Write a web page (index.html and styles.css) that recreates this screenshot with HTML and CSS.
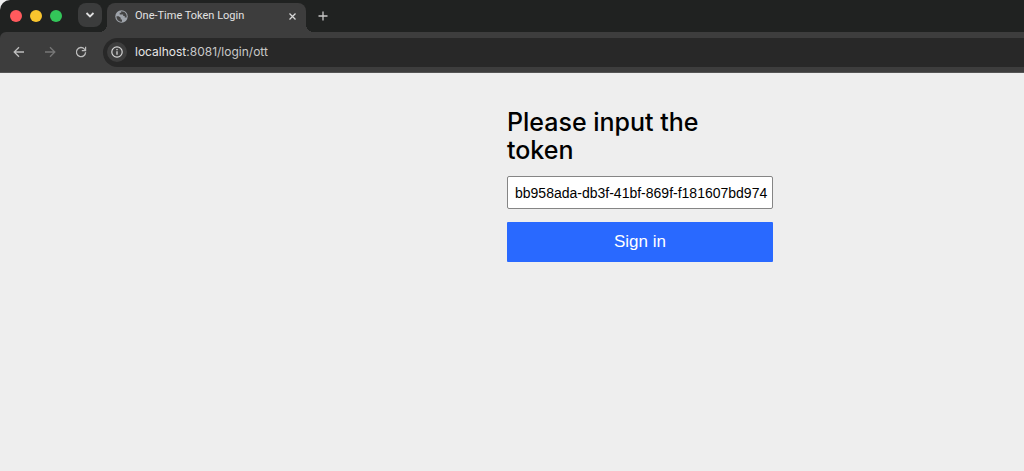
FILE: index.html
```
<!DOCTYPE html>
<html lang="en">
<head>
<meta charset="utf-8">
<title>One-Time Token Login</title>
<link rel="stylesheet" href="styles.css">
</head>
<body>
<header class="browser">
  <div class="tab-strip">
    <div class="lights"><span class="light red"></span><span class="light yellow"></span><span class="light green"></span></div>
    <button class="tab-search" type="button" aria-label="Search tabs">
      <svg width="10" height="8" viewBox="0 0 10 8"><path d="M1.500 2 5 5.500 8.500 2" fill="none" stroke="#dedede" stroke-width="1.800"/></svg>
    </button>
    <div class="tab">
      <svg class="globe" width="13" height="13" viewBox="0 0 13 13"><circle cx="6.500" cy="6.500" r="6.200" fill="#9fa4ab"/><path d="M1.500 6.200h2.200l2 1.600v1.600H7v2.300C3.700 12 1.300 9.500 1.500 6.200ZM6.200 1.200v1.500H4.700v1.800h3.500v1.400h1.500v1.600h1.900c.7-3.300-1.500-6.300-5.400-6.300Z" fill="#444"/></svg>
      <span class="tab-title">One-Time Token Login</span>
      <button class="icon-button close" type="button" aria-label="Close tab">
        <svg width="9" height="9" viewBox="0 0 9 9"><path d="m1.500 1.500 6 6m0-6-6 6" stroke="#d8d8d8" stroke-width="1.300"/></svg>
      </button>
    </div>
    <button class="icon-button new-tab" type="button" aria-label="New tab">
      <svg width="10" height="10" viewBox="0 0 10 10"><path d="M5 .5v9M.5 5h9" stroke="#c8c8c8" stroke-width="1.300"/></svg>
    </button>
  </div>
  <div class="toolbar">
    <button class="icon-button" type="button" aria-label="Back">
      <svg width="12" height="12" viewBox="0 0 12 12"><path d="M11 6H1.500M6 1.200 1.200 6 6 10.800" fill="none" stroke="#bdbdbd" stroke-width="1.300"/></svg>
    </button>
    <button class="icon-button" type="button" aria-label="Forward" disabled>
      <svg width="12" height="12" viewBox="0 0 12 12"><path d="M1 6h9.500M6 1.200 10.800 6 6 10.800" fill="none" stroke="#777" stroke-width="1.300"/></svg>
    </button>
    <button class="icon-button" type="button" aria-label="Reload">
      <svg width="12" height="12" viewBox="0 0 12 12"><path d="M10.600 6.300A4.600 4.600 0 1 1 9.500 3.100l1 1" fill="none" stroke="#bdbdbd" stroke-width="1.300"/><path d="M11.200.8v4.400H6.800V4h2.400l.8-.8V.8Z" fill="#bdbdbd"/></svg>
    </button>
    <div class="address">
      <span class="site-info"><svg width="12" height="12" viewBox="0 0 12 12"><circle cx="6" cy="6" r="5.200" fill="none" stroke="#d6d6d6" stroke-width="1.200"/><path d="M6 5.300v3.500M6 3v1.300" stroke="#d6d6d6" stroke-width="1.300"/></svg></span>
      <span class="url"><span class="host">localhost</span>:8081/login/ott</span>
    </div>
  </div>
</header>
<main class="page">
  <form class="login">
    <h1 class="heading"><label for="token">Please input the token</label></h1>
    <input class="token" id="token" type="text" value="bb958ada-db3f-41bf-869f-f181607bd974">
    <button class="submit" type="button">Sign in</button>
  </form>
</main>
</body>
</html>
```
FILE: styles.css
```
* {
  box-sizing: border-box;
}

body {
  margin: 0;
  background: #eee;
  color: #000;
  font-family: Inter, "Liberation Sans", sans-serif;
}

svg {
  display: block;
}

button {
  font-family: inherit;
}

.browser {
  background: #202221;
  border-top-left-radius: 10px;
  overflow: hidden;
}

.tab-strip {
  display: flex;
  height: 32px;
}

.lights {
  display: flex;
  align-items: center;
  gap: 8px;
  padding: 0 16px 0 10px;
}

.light {
  width: 12px;
  height: 12px;
  border-radius: 50%;
}

.red {
  background: #ff5a5d;
}

.yellow {
  background: #f9c52e;
}

.green {
  background: #33c659;
}

.tab-search {
  display: flex;
  align-items: center;
  justify-content: center;
  width: 24px;
  height: 24px;
  margin-top: 3px;
  padding: 0;
  border: 0;
  border-radius: 8px;
  background: #3b3c3c;
}

.tab {
  position: relative;
  display: flex;
  align-items: center;
  width: 199px;
  margin: 3px 0 0 5px;
  padding: 0 9px 3px 8px;
  border-radius: 8px 8px 0 0;
  background: #3d3d3d;
}

.tab::before,
.tab::after {
  content: "";
  position: absolute;
  bottom: 0;
  width: 8px;
  height: 8px;
}

.tab::before {
  right: 100%;
  background: radial-gradient(circle at 0 0, transparent 8px, #3d3d3d 8px);
}

.tab::after {
  left: 100%;
  background: radial-gradient(circle at 100% 0, transparent 8px, #3d3d3d 8px);
}

.tab-title {
  flex: 1;
  padding-left: 7px;
  color: #e2e2e2;
  font-family: Roboto, "Liberation Sans", sans-serif;
  font-size: 11px;
  line-height: 16px;
  white-space: nowrap;
}

.icon-button {
  display: flex;
  align-items: center;
  justify-content: center;
  padding: 0;
  border: 0;
  background: none;
}

.new-tab {
  margin-left: 12px;
}

.toolbar {
  display: flex;
  align-items: center;
  gap: 19px;
  height: 41px;
  padding-left: 13px;
  border-bottom: 1px solid #555;
  border-top-left-radius: 6px;
  background: #3d3d3d;
}

.address {
  display: flex;
  flex: 1;
  align-items: center;
  gap: 8px;
  height: 29px;
  margin-left: -3px;
  padding-left: 4px;
  border-radius: 15px 0 0 15px;
  background: #282828;
}

.site-info {
  display: flex;
  align-items: center;
  justify-content: center;
  width: 20px;
  height: 20px;
  border-radius: 50%;
  background: #3d3d3d;
}

.url {
  color: #c8c8c8;
  font-size: 12px;
  line-height: 16px;
}

.host {
  color: #e6e6e6;
}

.page {
  padding: 35px 0 35px 25%;
}

.login {
  display: flex;
  flex-direction: column;
  width: 266px;
  max-width: 100%;
  margin: 0 auto;
}

.heading {
  margin: 0 0 12px;
  padding-right: 16px;
  font-size: 25px;
  font-weight: 500;
  line-height: 28px;
}

.token {
  width: 100%;
  height: 33px;
  margin: 0 0 13px;
  padding: 0 4px 0 7px;
  border: 1px solid #858585;
  border-radius: 2px;
  background: #fff;
  color: #000;
  font-family: "Liberation Sans", Arial, sans-serif;
  font-size: 14px;
}

.submit {
  height: 40px;
  padding: 0;
  border: 0;
  border-radius: 1px;
  background: #2969ff;
  color: #fff;
  font-family: "Liberation Sans", Arial, sans-serif;
  font-size: 17px;
}
```
